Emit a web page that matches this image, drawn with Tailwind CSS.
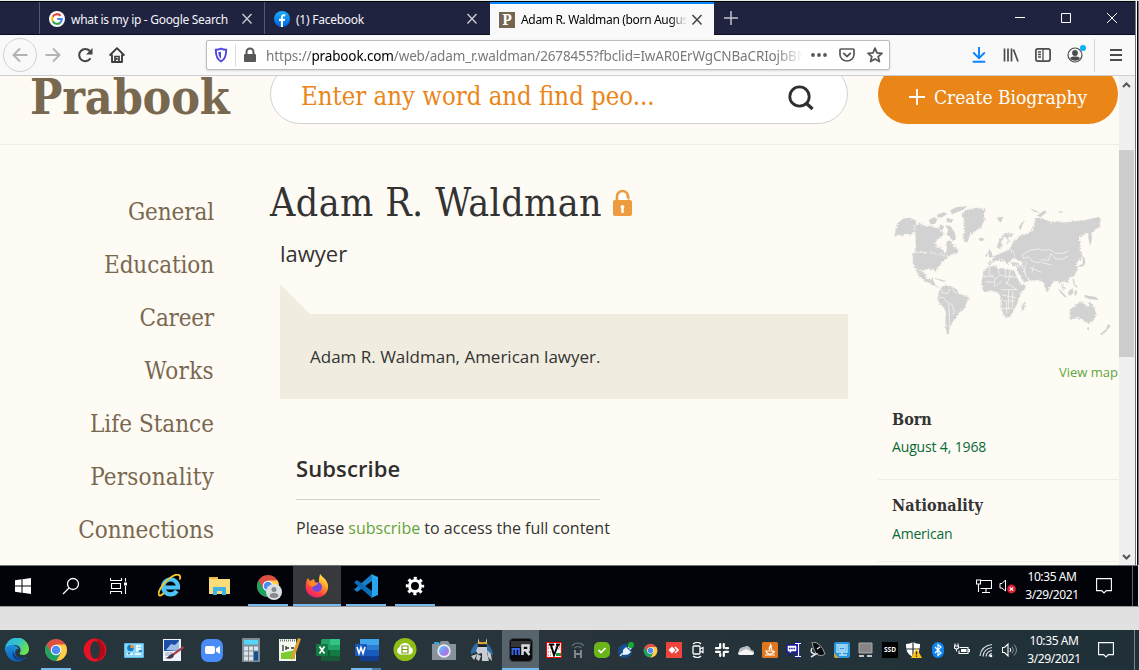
<!DOCTYPE html>
<html lang="en">
<head>
<meta charset="utf-8">
<title>Adam R. Waldman (born August 4, 1968)</title>
<script src="https://cdn.jsdelivr.net/npm/@tailwindcss/browser@4"></script>
</head>
<body class="w-[1139px] h-[670px] overflow-hidden bg-[#e1e1e1] font-['Open_Sans','Noto_Sans',sans-serif]">
<svg class="absolute w-0 h-0">
  <defs>
    <symbol id="chrome" viewBox="0 0 24 24">
      <circle cx="12" cy="12" r="11" fill="#dd5144"/>
      <path d="M12 6.5h9.5A11 11 0 0 1 12 23l4.800-8.200z" fill="#ffcd46"/>
      <path d="M2.500 6.500A11 11 0 0 0 12 23l4.800-8.200L12 17 7.200 14.700z" fill="#1da462"/>
      <circle cx="12" cy="12" r="5.300" fill="#fff"/>
      <circle cx="12" cy="12" r="4.300" fill="#4c8bf5"/>
    </symbol>
    <linearGradient id="edgeA" x1="0" y1="0" x2="1" y2="0.4"><stop offset="0" stop-color="#2bb3ea"/><stop offset=".6" stop-color="#35c4c4"/><stop offset="1" stop-color="#6be04f"/></linearGradient>
    <linearGradient id="edgeB" x1="0" y1="0" x2="0" y2="1"><stop offset="0" stop-color="#1c8fe0"/><stop offset="1" stop-color="#0f5fb0"/></linearGradient>
    <linearGradient id="fox" x1=".8" y1="0" x2=".2" y2="1"><stop offset="0" stop-color="#fff04a"/><stop offset=".35" stop-color="#ffa52b"/><stop offset=".7" stop-color="#ff4040"/><stop offset="1" stop-color="#e31587"/></linearGradient>
    <linearGradient id="lens" x1="0" y1="0" x2="1" y2="1"><stop offset="0" stop-color="#5cd0f7"/><stop offset=".5" stop-color="#8c8cf0"/><stop offset="1" stop-color="#d05ad0"/></linearGradient>
    <linearGradient id="fb" x1="0" y1="0" x2="0" y2="1"><stop offset="0" stop-color="#19afff"/><stop offset="1" stop-color="#0062e0"/></linearGradient>
    <filter id="coast" x="-.05" y="-.05" width="1.1" height="1.1"><feTurbulence type="fractalNoise" baseFrequency=".3" numOctaves="2" seed="4" result="n"/><feDisplacementMap in="SourceGraphic" in2="n" scale="14" xChannelSelector="R" yChannelSelector="G"/></filter>
  </defs>
</svg>

<!-- Remote desktop window -->
<div class="flex flex-col h-[607px] border-t border-t-[#dfeee8] border-b border-b-[#999]">
 <div class="flex h-[564px]">
  <div class="flex flex-col w-[1135px]">

  <!-- Tab strip -->
  <div class="flex h-[34px] bg-[#202340] border-t border-black border-b border-b-[#0c0c24] font-['Noto_Sans',sans-serif] text-[12px] text-[#f4f4f8]">
    <div class="w-[39px] shrink-0"></div>
    <div class="flex items-center w-[225px] shrink-0 border-l border-[#55576e] pl-[9px] pt-px">
      <svg class="w-4 h-4 shrink-0" viewBox="0 0 16 16"><circle cx="8" cy="8" r="8" fill="#fff"/><g fill="none" stroke-width="2.100"><path d="M11.600 4.700A4.900 4.900 0 0 0 3.700 5.700" stroke="#ea4335"/><path d="M3.700 5.700a4.900 4.900 0 0 0 0 4.600" stroke="#fbbc05"/><path d="M3.700 10.300a4.900 4.900 0 0 0 7.600 1.300" stroke="#34a853"/><path d="M11.300 11.600A4.700 4.700 0 0 0 12.800 8H8.200" stroke="#4285f4"/></g></svg>
      <span class="ml-[6px] mt-[2px] w-[158px] shrink-0 whitespace-nowrap tracking-[-0.3px]">what is my ip - Google Search</span>
      <svg class="ml-[12px] w-3 h-3" viewBox="0 0 12 12"><path d="M1.500 1l9 9.500M10.500 1l-9 9.500" stroke="#c9cad3" stroke-width="1.400"/></svg>
    </div>
    <div class="flex items-center w-[226px] shrink-0 border-l border-[#55576e] pl-[9px] pt-px">
      <svg class="w-4 h-4 shrink-0" viewBox="0 0 16 16"><circle cx="8" cy="8" r="8" fill="url(#fb)"/><path d="M6.900 16V10H5V7.700h1.900V6.200c0-2 1.100-3 2.800-3l1.500.1v2h-1c-.9 0-1.200.5-1.200 1.100v1.300h2.100L10.800 10H9v6z" fill="#fff"/></svg>
      <span class="ml-[6px] mt-[2px] w-[158px] whitespace-nowrap tracking-[-0.25px]">(1) Facebook</span>
      <svg class="ml-[12px] w-3 h-3" viewBox="0 0 12 12"><path d="M1.500 1l9 9.500M10.500 1l-9 9.500" stroke="#c9cad3" stroke-width="1.400"/></svg>
    </div>
    <div class="flex items-center w-[224px] h-[33px] shrink-0 bg-[#f9f9fa] border-t-2 border-[#0a84ff] pl-[9px] text-black">
      <span class="flex items-center justify-center w-4 h-4 shrink-0 bg-[#766553] text-white text-[14px] leading-none font-bold font-['DejaVu_Serif_Condensed','DejaVu_Serif',serif]">P</span>
      <span class="ml-[6px] mt-px w-[166px] overflow-hidden whitespace-nowrap tracking-[-0.33px] mask-r-from-90% mask-r-to-100%">Adam R. Waldman (born Augus</span>
      <svg class="ml-[4px] w-3 h-3 shrink-0" viewBox="0 0 12 12"><path d="M1.500 1l9 9.500M10.500 1l-9 9.500" stroke="#444" stroke-width="1.500"/></svg>
    </div>
    <svg class="ml-[9px] mt-[8px] w-4 h-4" viewBox="0 0 16 16"><path d="M8 1v14M1 8h14" stroke="#c3c4ce" stroke-width="1.500"/></svg>
    <div class="flex items-center ml-auto mr-[18px] gap-[36px] text-white">
      <svg class="w-[10px] h-[10px]" viewBox="0 0 10 10"><path d="M0 4.500h10" stroke="#fff"/></svg>
      <svg class="w-[10px] h-[10px]" viewBox="0 0 10 10"><path d="M.5.500h9v9h-9z" fill="none" stroke="#fff"/></svg>
      <svg class="w-[10px] h-[10px]" viewBox="0 0 10 10"><path d="M0 0l10 10M10 0L0 10" stroke="#fff"/></svg>
    </div>
  </div>

  <!-- Navigation toolbar -->
  <div class="flex items-center h-[41px] bg-[#f9f9fa] border-b border-[#cfcfd3] font-['Noto_Sans',sans-serif]">
    <div class="flex items-center justify-center ml-[3px] w-[34px] h-[34px] rounded-full border border-[#d0d0d3]">
      <svg class="w-4 h-4" viewBox="0 0 16 16"><path d="M15.500 8H1.500M8 1.500L1.500 8 8 14.500" fill="none" stroke="#b3b3b4" stroke-width="1.900"/></svg>
    </div>
    <svg class="ml-[8px] w-4 h-4" viewBox="0 0 16 16"><path d="M.5 8h14M8 1.500L14.500 8 8 14.500" fill="none" stroke="#b3b3b4" stroke-width="1.900"/></svg>
    <svg class="ml-[16px] w-4 h-4" viewBox="0 0 16 16"><path d="M13.500 11.300A6.100 6.100 0 1 1 12.800 4" fill="none" stroke="#444" stroke-width="2"/><path d="M15.500 1v6.500H9z" fill="#444"/></svg>
    <svg class="ml-[16px] w-4 h-4" viewBox="0 0 16 16"><path d="M.6 8.600L8 1.200l7.400 7.400M3 7.500V15h10V7.500" fill="none" stroke="#3d3d3f" stroke-width="1.900" stroke-linejoin="round"/><path d="M6 15V9.500h4V15M7.800 11v2" fill="none" stroke="#3d3d3f" stroke-width="1.700"/></svg>
    <div class="flex items-center ml-[81px] w-[684px] h-[30px] bg-white border border-[#bdbdc0] shadow-sm rounded-[2px] pl-[6px]">
      <svg class="w-4 h-4 shrink-0" viewBox="0 0 16 16"><path d="M8 1.600c2 .9 3.800 1.100 5.200 1.100 0 5-.6 9.400-5.200 11.800C3.400 12.100 2.800 7.700 2.800 2.700 4.200 2.700 6 2.500 8 1.600z" fill="none" stroke="#5148db" stroke-width="1.900"/><path d="M8 4.500v7.200C5.800 10 5.400 7.600 5.300 5.100 6.300 5.100 7 4.900 8 4.500z" fill="#5148db"/></svg>
      <span class="ml-[6px] w-px h-[22px] bg-[#dcdce0]"></span>
      <svg class="ml-[8px] w-3 h-4 shrink-0" viewBox="0 0 12 16"><rect y="7" width="12" height="8" rx="1" fill="#58585a"/><path d="M2.500 8V5a3.500 3.500 0 0 1 7 0v3" fill="none" stroke="#58585a" stroke-width="2"/></svg>
      <span class="ml-[10px] w-[537px] h-[22px] leading-[24px] shrink-0 overflow-hidden whitespace-nowrap text-[13.500px] text-[#7a7a7c] mask-r-from-95% mask-r-to-100%"><span class="tracking-[-0.14px]">https://<span class="text-black">prabook.com</span>/web/adam_r.waldman/2678455?fbclid=IwAR0ErWgCNBaCRIojbBNS</span></span>
      <svg class="ml-[8px] w-4 h-4 shrink-0" viewBox="0 0 16 16" fill="#58585a"><circle cx="2" cy="8" r="1.900"/><circle cx="8" cy="8" r="1.900"/><circle cx="14" cy="8" r="1.900"/></svg>
      <svg class="ml-[12px] w-4 h-4 shrink-0" viewBox="0 0 16 16"><path d="M2 2h12q1 0 1 1v4.500a7 6.500 0 0 1-14 0V3q0-1 1-1z" fill="none" stroke="#58585a" stroke-width="1.700"/><path d="M4.700 6.400L8 9.500l3.300-3.100" fill="none" stroke="#58585a" stroke-width="1.900" stroke-linecap="round"/></svg>
      <svg class="ml-[12px] w-4 h-4 shrink-0" viewBox="0 0 16 16"><path d="M8 1.200l2 4.600 5 .5-3.800 3.300 1.200 5L8 12l-4.400 2.600 1.200-5L1 6.300l5-.5z" fill="none" stroke="#58585a" stroke-width="1.800" stroke-linejoin="round"/></svg>
    </div>
    <div class="flex items-center ml-auto">
      <svg class="w-4 h-4" viewBox="0 0 16 16"><path d="M8 .5v10.500M2.800 6L8 11.200 13.200 6M2.500 14.700h11" fill="none" stroke="#0a84ff" stroke-width="1.900" stroke-linecap="round"/></svg>
      <svg class="ml-[16px] w-4 h-4" viewBox="0 0 16 16"><path d="M1.500 1.500v13M5 1.500v13M8.500 1.500v13M10.500 2.500l4.500 12" stroke="#4c4c4e" stroke-width="1.700"/></svg>
      <svg class="ml-[16px] w-4 h-4" viewBox="0 0 16 16"><rect x=".9" y="1.900" width="14.200" height="12.200" rx="2" fill="none" stroke="#4c4c4e" stroke-width="1.700"/><path d="M8 2v12M3 5h3M3 7.500h3M3 10h3" stroke="#4c4c4e" stroke-width="1.300"/></svg>
      <div class="relative ml-[16px] w-4 h-4">
        <svg class="w-4 h-4" viewBox="0 0 16 16"><circle cx="8" cy="8" r="7" fill="none" stroke="#4c4c4e" stroke-width="1.200"/><circle cx="8" cy="6" r="2.900" fill="#4c4c4e"/><path d="M3 11c1.500-1.400 3-1.600 5-1.600s3.500.2 5 1.600a5.900 5.900 0 0 1-10 0z" fill="#4c4c4e"/></svg>
        <span class="absolute left-[13px] top-[-2px] w-[6px] h-[6px] rounded-full bg-[#00b3f4]"></span>
      </div>
      <span class="ml-[11px] w-px h-[33px] bg-[#d7d7db]"></span>
      <svg class="ml-[14px] mr-[12px] w-[14px] h-4" viewBox="0 0 14 16"><path d="M1 3h12M1 8h12M1 13h12" stroke="#4c4c4e" stroke-width="2"/></svg>
    </div>
  </div>

  <!-- Page viewport -->
  <div class="flex h-[489px] bg-[#fefbf4]">
    <div class="flex flex-col w-[1119px] overflow-hidden">
      <header class="flex h-[69px] shrink-0 border-b border-[#efede9]">
        <div class="w-[270px] pl-[30px]"><div class="-mt-[7px] font-['DejaVu_Serif_Condensed','DejaVu_Serif',serif] font-bold text-[48px] leading-[56px] text-[#786850] tracking-[-0.2px]">Prabook</div></div>
        <div class="flex w-[578px] h-[60px] -mt-[12px] rounded-[30px] border border-[#d2d2d4] bg-white pl-[30px]">
          <div class="mt-[9px] w-[486px] font-['DejaVu_Serif_Condensed','DejaVu_Serif',serif] text-[25.500px] leading-[44px] text-[#ea8518]">Enter any word and find peo...</div>
          <svg class="mt-[19px] w-[28px] h-[28px]" viewBox="0 0 28 28"><circle cx="12.500" cy="12.500" r="9.700" fill="none" stroke="#2e3030" stroke-width="2.800"/><path d="M19 19l6.500 6" stroke="#2e3030" stroke-width="3.200"/></svg>
        </div>
        <div class="flex ml-[30px] w-[240px] h-[60px] -mt-[12px] rounded-[30px] bg-[#ea8518] pl-[31px] text-white">
          <svg class="mt-[25px] w-4 h-4" viewBox="0 0 16 16"><path d="M8 0v16M0 8h16" stroke="#fff" stroke-width="1.800"/></svg>
          <div class="ml-[9px] mt-[12px] whitespace-nowrap font-['DejaVu_Serif_Condensed','DejaVu_Serif',serif] text-[19px] leading-[42px]">Create Biography</div>
        </div>
      </header>
      <div class="flex flex-1">
        <nav class="flex flex-col items-end w-[214px] pt-[41px] font-['DejaVu_Serif_Condensed','DejaVu_Serif',serif] text-[24px] leading-[53px] text-[#786850] whitespace-nowrap">
          <a class="h-[53px] tracking-[-0.1px]">General</a><a class="h-[53px] tracking-[-0.1px]">Education</a><a class="h-[53px] tracking-[-0.2px]">Career</a><a class="h-[53px] tracking-[0.3px]">Works</a><a class="h-[53px]">Life Stance</a><a class="h-[53px] tracking-[0.15px]">Personality</a><a class="h-[53px]">Connections</a>
        </nav>
        <main class="w-[578px] ml-[56px]">
          <div class="flex items-start pt-[32px]">
            <h1 class="w-[342px] font-['DejaVu_Serif_Condensed','DejaVu_Serif',serif] text-[39px] leading-[51px] tracking-[0.42px] text-[#333] whitespace-nowrap">Adam R. Waldman</h1>
            <svg class="mt-[11px] w-[21px] h-[29px]" viewBox="0 0 21 29"><path d="M5 13V8.500a5.500 5.500 0 0 1 11 0V12z" fill="#fff" stroke="#ee9b40" stroke-width="2.700"/><path d="M6.400 9.500h9.800v2.500H6.400z" fill="#fff"/><path d="M14.700 8h2.700v2.500h-2.700z" fill="#ee9b40"/><rect x="1" y="12" width="19" height="16" rx="2" fill="#ee9b40"/><path d="M10.500 17a2 2 0 0 1 1.200 3.500V25H9.300v-4.500A2 2 0 0 1 10.500 17z" fill="#fff"/></svg>
          </div>
          <div class="pl-[10px] pt-[8px] text-[22px] leading-[34px] text-[#333]">lawyer</div>
          <svg class="ml-[10px] mt-[14px] block w-[30px] h-[30px]" viewBox="0 0 30 30"><path d="M0 0l30 30H0z" fill="#f0ede0"/></svg>
          <div class="ml-[10px] w-[568px] h-[85px] bg-[#f0ece0] pl-[30px] pt-[30px] text-[17px] leading-[26px] text-[#333]">Adam R. Waldman, American lawyer.</div>
          <div class="pl-[26px] mt-[53px] text-[22px] leading-[32px] tracking-[0.1px] font-semibold text-[#2e2e2e]">Subscribe</div>
          <div class="ml-[26px] mt-[15px] w-[304px] h-px bg-[#d3d1cc]"></div>
          <div class="pl-[26px] mt-[15px] text-[16px] leading-[26px] text-[#333] whitespace-nowrap">Please <a class="text-[#5fa53c]">subscribe</a> to access the full content</div>
        </main>
        <aside class="flex flex-col w-[240px] ml-[30px]">
          <svg class="ml-[2px] mt-[50px] w-[240px] h-[150px] shrink-0" viewBox="0 0 720 450">
            <g fill="#d2d2d2" stroke="#fefbf4" stroke-width="2" filter="url(#coast)">
              <path d="M45 110l8-26 16-14 20-3 18 8 4 12-10 28-10 6-14-4-8 6-18-2-8 8z"/>
              <path d="M104 92l14-8 22 10 14-4 10 8 12-2 6 12 10 4-2 10-16 10-8 14 6 10 16 6 6 12 4-4 2-14-2-16 12-6 8 16 12 6 6 14-6 8-16 2-12 8-10 2-46-4-40-2-2-10 2-26z"/>
              <path d="M96 172h44l44 5 8 6 14-2-6 10-14 10-4 10-10 8-4 14-8-10-20 1-14 6-14-5-10-6-4-20z"/>
              <path d="M104 222l12 4 12 4 10 6 2 14 8 4 4-6h8l-3 8 8 8 4 8 10 4-4 3-14-6-14-8-16-6-6-10-6-4-8-12z"/>
              <path d="M175 290l10-16 12-4 22 4 12 8 8 14 24 8 4 6-8 16-2 14-16 10-10 16-12 14-6 12-4 8-2 20h-5l-6-20-1-30 1-20-4-10-12-12-7-14z"/>
              <path d="M244 54l20-12 28-4 26 6-6 16 4 16-10 14 2 6-20 12-14 8-6 12-6 16h-8l-6-18 4-20-2-30z"/>
              <path d="M312 228l8-12 18-4 12-2 4 10 16-2 8 4 20 2 8 6 6 18 8 14 6 8 14-4-4 14-16 20-4 14-4 16-8 10-4 14-10 12-12 3-6-3-6-14-4-18 2-14-6-18-2-8-18-6-22 4-10-10-3-20z"/>
              <path d="M426 328l9-9 3 7-8 22-7-3z"/>
              <path d="M349 158l8-24 16-19 24-2 2 12-12 0 2 18-10 8 4-14-8-14-10 16 4 16-8 6z"/>
              <path d="M322 200l14-4 4-12 14-8 18-6 20-12 18-4 10 6-4 18 4 12-12 4-10-4-8 12-8 6-8-8-10-10 4 14-12-8-10 2-8 8-14 4z"/>
              <path d="M390 202l14-2 16 4-2 8-24 2z"/>
              <path d="M410 210l16 2 8 16 18 16 6 2-8 12-20 6-10-20-10-18z"/>
              <path d="M390 158l10-20 24-18 22-6 12-12 6-28 12-8 20 6 16 10 20-4 18 4 30-4 36-4 20-6 24-2 4 8-4 8 2 14-16 8-8 14-2-6-24 6-18 14 8 8-2 20 8 20-4 14-10 4-4 10 4 14-10 20-18 10-4 14-12-6-6 2 12 20-6 4-10-22-8-6-8 2-14 16-4 18-8-6-10-26-12-6-20 2-18-12-2-14-8-12-2-18-16-6z"/>
              <path d="M568 344l16-10 10-12 16-2 8 12 8 2 2-18 8 10 10 18 4 14-10 20-12 8-16-4-8-10-16-2-20 6z"/>
            </g>
            <g fill="#d2d2d2">
              <path d="M146 76l16-10 10 6-6 14-14 2zM170 60l20-8 12 4-14 10-14 2zM196 90l16 4 12 18 4 20-10 6-10-14-8-4 4-14zM210 46l22-10 30-2-12 10-20 8-14 6zM180 88l12 6-4 12-10-2zM200 68l20 6-6 10-14-4zM296 130l12-2 6 6-10 5-8-4zM324 172l4-10 8 12 2 12-10 2zM318 176l5 0-2 10-5-2zM350 68l20-3-8 18-6-6zM416 98l8-14 12-8-8 12-6 18zM450 40l20 8 10 6-18-4zM470 62l24-16 6 6-18 14zM532 50l20-2-10 6zM626 94l8 12 2 28-6 18-5-24zM608 184l6 6 2 14-6 10-14 2 2-5 10-4zM534 280l8 6 18 20-4 2-14-14zM566 288l12-8 2 14-10 8-6-6zM584 286l8 2-4 14-4-2zM578 248l4 4 2 16 10 8-4 2-10-10zM612 300l14 2 22 4 8 10-10-2-20-2-12-6zM620 398l9-1-4 10zM684 386l8 8-10 10-4-2zM678 402l4 5-18 14-4-3zM160 248l24 6 16 4-10 2-24-8zM496 270l4 2-1 8-4-2z"/>
            </g>
            <g fill="none" stroke="#fefbf4" stroke-width="2">
              <path d="M426 180l22-14 28-4 12 4 22-2 16 10 22 2 18-8M426 180l4 10 16-4 10 12 20 6 10-10 20 2 6-20M512 176l16 16 20 0 16-8"/>
              <path d="M178 274l8 18 16 4 8-14M177 306l14 2 8 12 16 8 8 20-4 12M206 326l4 76M218 276l4 14 16 6"/>
              <path d="M330 214l-4 22 22 16 12-14 16 8 24-4M356 212v26M376 222v24M390 222l-2 26-8 20M410 246h-22M310 246l30-4M344 252v24M364 258l-14 14M376 262l34 22M362 284h52M366 300l42 8M370 318h34M362 340h34M386 284v60M398 290v48M380 320v36M316 260l26 2M440 200l-8 32M448 218l36 14M460 214l-4 20M484 202l30 8"/>
            </g>
          </svg>
          <a class="self-end mt-[15px] text-[13px] leading-[24px] text-[#5fa53c]">View map</a>
          <div class="pl-[14px] mt-[23px] font-['DejaVu_Serif_Condensed','DejaVu_Serif',serif] font-bold text-[16px] leading-[26px] text-[#333]">Born</div>
          <div class="pl-[14px] mt-[2px] text-[14px] leading-[24px] tracking-[-0.15px] text-[#076a35]">August 4, 1968</div>
          <div class="mt-[20px] h-px shrink-0 bg-[#efede9]"></div>
          <div class="pl-[14px] mt-[13px] font-['DejaVu_Serif_Condensed','DejaVu_Serif',serif] font-bold text-[16px] leading-[26px] tracking-[0.1px] text-[#333]">Nationality</div>
          <div class="pl-[14px] mt-[3px] text-[14px] leading-[24px] tracking-[-0.2px] text-[#076a35]">American</div>
          <div class="mt-[15px] h-px shrink-0 bg-[#efede9]"></div>
        </aside>
      </div>
    </div>
    <!-- Vertical scrollbar -->
    <div class="flex flex-col w-[16px] bg-[#f0f0f0]">
      <svg class="w-[15px] h-[17px]" viewBox="0 0 15 17"><path d="M4 11l3.500-3.500L11 11" fill="none" stroke="#555" stroke-width="2"/></svg>
      <div class="mt-[57px] w-[15px] h-[207px] bg-[#cdcdcd]"></div>
      <svg class="mt-auto w-[15px] h-[17px]" viewBox="0 0 15 17"><path d="M4 7l3.500 3.500L11 7" fill="none" stroke="#555" stroke-width="2"/></svg>
    </div>
  </div>
  </div>
  <div class="w-px bg-[#777]"></div><div class="w-px bg-white"></div><div class="w-px bg-black"></div><div class="w-px bg-[#777]"></div>
 </div>

 <!-- Remote taskbar -->
 <div class="flex h-[41px] w-[1138px] bg-[#010309] border-t border-[#6d7373] text-white">
   <div class="flex items-center justify-center w-[46px]"><svg class="w-4 h-4" viewBox="0 0 16 16" fill="#fff"><path d="M0 2.200L6.500 1.300v6.200H0zM7.500 1.200L16 0v7.500H7.500zM0 8.500h6.500v6.200L0 13.800zM7.500 8.500H16V16l-8.500-1.200z"/></svg></div>
   <div class="flex items-center justify-center w-[49px]"><svg class="w-[18px] h-[18px]" viewBox="0 0 18 18"><circle cx="11" cy="7" r="5.500" fill="none" stroke="#fff" stroke-width="1.300"/><path d="M7 11l-6 6" stroke="#fff" stroke-width="1.300"/></svg></div>
   <div class="flex items-center justify-center w-[47px]"><svg class="w-[17px] h-[16px]" viewBox="0 0 17 16"><path d="M.5 0v2.500h11V0M.5 16v-2.500h11V16M1.500 5.500h9v5h-9zM15.500 0v3.500M15.500 8v8" fill="none" stroke="#fff" stroke-width="1.100"/><path d="M14 4.500h3v3h-3z" fill="#fff"/></svg></div>
   <div class="flex items-center justify-center w-[55px]"><svg class="w-6 h-6" viewBox="0 0 24 24"><path d="M5.500 13.500H20A7.500 7.500 0 1 0 18.800 17" fill="none" stroke="#4cc3f5" stroke-width="4.200"/><path d="M6 19C1 24-1.500 21 3 13.500S18-2 21.500 1.500c1 1 .8 2.600 0 4.200" fill="none" stroke="#f5c52c" stroke-width="1.800"/></svg></div>
   <div class="flex items-center justify-center w-[45px]"><svg class="w-[23px] h-[20px]" viewBox="0 0 23 20"><path d="M1 1h8l1 2h12v15H1z" fill="#fbdc7b"/><path d="M1 1h9v2H1z" fill="#f0b93c"/><path d="M5 11h13v8h-4v-4H9v4H5z" fill="#3fb2ea"/></svg></div>
   <div class="flex flex-col items-center ml-[6px] w-[40px]"><div class="relative mt-[8px] w-6 h-6"><svg class="w-6 h-6"><use href="#chrome"/></svg><svg class="absolute left-[10px] top-[10px] w-[16px] h-[16px]" viewBox="0 0 16 16"><circle cx="8" cy="8" r="8" fill="#dcdfe1"/><circle cx="8" cy="5.500" r="2.500" fill="#858a8e"/><ellipse cx="8" cy="11.500" rx="4.300" ry="2.500" fill="#858a8e"/></svg></div><div class="mt-auto w-full h-[2px] bg-[#76b9ed]"></div></div>
   <div class="flex flex-col items-center ml-[5px] w-[48px] bg-[#37393c]"><svg class="mt-[8px] w-6 h-6" viewBox="0 0 24 24"><path d="M15 0c2 3 7 5 8 11 1 7-4.500 12.500-11 12.500S0 18.500.700 12C1 9 1 7 3 4l2 3 4-2 1 3 4 1V5z" fill="url(#fox)"/><circle cx="12" cy="13" r="5" fill="#7547dd"/><path d="M3 9c4-2 7 0 10 0-1 3-4 2-5 4-2-1-4-2-5-4z" fill="#ff8a24"/></svg><div class="mt-auto w-full h-[2px] bg-[#76b9ed]"></div></div>
   <div class="flex flex-col items-center ml-[5px] w-[40px]"><svg class="mt-[8px] w-6 h-6" viewBox="0 0 24 24"><path d="M18 0v7L3 18l-3-2.500z" fill="#1480cc"/><path d="M18 24v-7L3 6 0 8.500z" fill="#0a6cb8"/><path d="M17 0l7 3v18l-7 3 1-1.500V2z" fill="#25a6ef"/></svg><div class="mt-auto w-full h-[2px] bg-[#76b9ed]"></div></div>
   <div class="flex flex-col items-center ml-[9px] w-[40px]"><svg class="mt-[10px] w-5 h-5" viewBox="0 0 20 20"><circle cx="10" cy="10" r="5.500" fill="none" stroke="#fff" stroke-width="3"/><circle cx="10" cy="10" r="7.700" fill="none" stroke="#fff" stroke-width="3" stroke-dasharray="3.024 3.024" stroke-dashoffset="1.500"/></svg><div class="mt-auto w-full h-[2px] bg-[#76b9ed]"></div></div>
   <div class="flex items-center ml-auto">
     <svg class="w-4 h-4" viewBox="0 0 16 16"><path d="M4.500 2.500h11v8h-11M10 10.500v4M6 14.500h8M.5 2h4v4h-4zM2.500 6v8" fill="none" stroke="#fff" stroke-width="1.100"/></svg>
     <svg class="ml-[7px] w-[17px] h-4" viewBox="0 0 17 16"><path d="M1 5.500h2l3.500-3.500v11L3 10H1z" fill="none" stroke="#fff"/><circle cx="12.500" cy="11" r="4.400" fill="#e02136"/><path d="M10.800 9.300l3.400 3.400M14.200 9.300l-3.400 3.400" stroke="#fff" stroke-width="1.200"/></svg>
     <div class="ml-[6px] w-[60px] text-center text-[12px] leading-[18px] tracking-[-0.4px] whitespace-nowrap font-['Noto_Sans',sans-serif]">10:35 AM<br>3/29/2021</div>
     <svg class="ml-[14px] w-[16px] h-[16px] mr-[20px]" viewBox="0 0 16 16"><path d="M.6.600h14.800v12h-5L8 15 5.600 12.600h-5z" fill="none" stroke="#fff" stroke-width="1.100"/></svg>
     <div class="w-px h-[40px] mr-[5px] bg-[#606468]"></div>
   </div>
 </div>
</div>

<!-- Host taskbar -->
<div class="flex mt-[23px] h-[40px] bg-linear-to-r from-[#26353c] via-[#28343a] to-[#1f3038] text-white">
  <div class="flex ml-[-3px] w-[545px] shrink-0">
    <div class="flex justify-center pt-[8px] w-[39px]"><svg class="w-6 h-6" viewBox="0 0 24 24"><path d="M0 12a12 12 0 0 1 24-1c0 4-3 6-6 6-3 0-4-1-3-2.500C17 11 14 7 10 7 5 7 1 10 0 14z" fill="url(#edgeA)"/><path d="M.200 10C3 6 12 6 14 11c-5-1-6 9 3 9 2 0 3-.5 5-1.300C15 27 1 25 .200 10z" fill="url(#edgeB)"/><path d="M8 13c-3 8 7 13 14 5.700C14 22 9 18 8 13z" fill="#123f8c"/></svg></div>
    <div class="flex flex-col items-center pt-[8px] w-[39px]"><svg class="w-6 h-6"><use href="#chrome"/></svg><div class="mt-auto w-[30px] h-[2px] bg-[#76b9ed]"></div></div>
    <div class="flex justify-center pt-[8px] w-[39px]"><svg class="w-6 h-6" viewBox="0 0 24 24"><ellipse cx="12" cy="12" rx="11.300" ry="11.500" fill="#e81224"/><path d="M14 1a11.300 11.500 0 0 1 0 22z" fill="#b00a18"/><ellipse cx="12" cy="12" rx="4.800" ry="9" fill="#29363c"/></svg></div>
    <div class="flex justify-center pt-[8px] w-[39px]"><svg class="w-6 h-6" viewBox="0 0 24 24"><rect x="2" y="5" width="20" height="15" rx="1" fill="#5ab8ea"/><rect x="3" y="6" width="18" height="13" fill="#8bd5f7"/><circle cx="8.500" cy="10" r="3.300" fill="#1979c4"/><path d="M8.500 10V6.700a3.300 3.300 0 0 1 3.300 3.300z" fill="#f39a26"/><path d="M14 8h5M14 11h5M5 16h6M13 16h6M15 7v7" stroke="#fff" stroke-width="1.300"/><path d="M17 13h3M6 15.500h2" stroke="#1979c4" stroke-width="1.600"/></svg></div>
    <div class="flex justify-center pt-[8px] w-[38px]"><svg class="w-6 h-6" viewBox="0 0 24 24"><path d="M3 1h18v22H3z" fill="#f0f4fa"/><path d="M4 2h15v11H4z" fill="#1d4fa8"/><path d="M6 12l5-6 4 1 4-4v10z" fill="#9dbce6"/><path d="M5 15h8M5 17h5" stroke="#8aa5cf"/><path d="M23 8L12 16l1 2L24 10z" fill="#b43a45"/><path d="M13 16c-3-1-4 4-8 4 5 2 9 0 9-3z" fill="#443848"/></svg></div>
    <div class="flex justify-center pt-[8px] w-[41px]"><svg class="w-6 h-6" viewBox="0 0 24 24"><rect x="1" y="1" width="22" height="23" rx="7" fill="#4a8cf7"/><rect x="5" y="8" width="10" height="8" rx="2" fill="#fff"/><path d="M16 10.500L20 8v8l-4-2.500z" fill="#fff"/></svg></div>
    <div class="flex justify-center pt-[8px] w-[38px]"><svg class="w-6 h-6" viewBox="0 0 24 24"><rect x="3" y="0" width="18" height="24" rx="1" fill="#7e8c98"/><rect x="5" y="2" width="14" height="4.500" fill="#53d6f7"/><path d="M5 8.500h4v4H5zm5 0h4v4h-4zm5 0h4v4h-4zM5 13.500h4v4H5zm5 0h4v4h-4zM5 18.500h4v4H5zm5 0h4v4h-4z" fill="#dbe2e8"/><path d="M15 13.500h4v9h-4z" fill="#135093"/></svg></div>
    <div class="flex justify-center pt-[8px] w-[38px]"><svg class="w-6 h-6" viewBox="0 0 24 24"><path d="M2 1h17v22H2z" fill="#f4f8ef"/><path d="M4 15l14-3v9H4z" fill="#7acb32"/><path d="M3 2.500h15" stroke="#777" stroke-dasharray="1 1" stroke-width="2"/><path d="M6 7v6M9 8v4M9 10h3M14 10h3" stroke="#333" stroke-width="1.300"/><path d="M21 0l3 1-7 19-3 2v-3z" fill="#dba031"/></svg></div>
    <div class="flex justify-center pt-[8px] w-[39px]"><svg class="w-6 h-6" viewBox="0 0 24 24"><rect x="5" y="1" width="19" height="22" rx="1.500" fill="#21a366"/><path d="M14 1h10v6H14z" fill="#33c481"/><path d="M5 12h19v11H5z" fill="#185c37"/><path d="M14 12h10v6H14z" fill="#107c41"/><rect y="6" width="12" height="12" rx="1" fill="#107c41"/><path d="M3.500 8.500l5 7M8.500 8.500l-5 7" stroke="#fff" stroke-width="1.700"/></svg></div>
    <div class="relative flex justify-center pt-[8px] w-[39px]"><svg class="w-6 h-6" viewBox="0 0 24 24"><rect x="5" y="1" width="19" height="22" rx="1.500" fill="#2b7cd3"/><path d="M5 1h19v6H5z" fill="#41a5ee"/><path d="M5 12h19v6H5z" fill="#185abd"/><path d="M5 18h19v5H5z" fill="#103f91"/><rect y="6" width="12" height="12" rx="1" fill="#185abd"/><path d="M2 9l2 6.500L6 9.500l2 6L10 9" fill="none" stroke="#fff" stroke-width="1.600"/></svg><div class="absolute bottom-0 left-[4px] flex w-[30px] h-[2px]"><span class="w-[21px] bg-[#76b9ed]"></span><span class="w-[9px] bg-[#4d7ba0]"></span></div></div>
    <div class="flex justify-center pt-[8px] w-[38px]"><svg class="w-6 h-6" viewBox="0 0 24 24"><circle cx="12" cy="11.500" r="11.500" fill="#8fbf16"/><path d="M7 16.500a4 4 0 0 1-.5-7.500 5.800 5.800 0 0 1 11 0 4 4 0 0 1-.5 7.500z" fill="#fff"/><path d="M9 8h6v7H9zM9 11.500h6" fill="none" stroke="#72a00c" stroke-width="1.200"/></svg></div>
    <div class="flex justify-center pt-[8px] w-[39px]"><svg class="w-6 h-6" viewBox="0 0 24 24"><path d="M0 6h7l2-3h7l2 3h6v16H0z" fill="#87929b"/><path d="M2 4h5v2H2z" fill="#2ea3e6"/><circle cx="12" cy="13" r="6.700" fill="#e8ecf0"/><circle cx="12" cy="13" r="5" fill="url(#lens)"/></svg></div>
    <div class="flex justify-center pt-[8px] w-[38px]"><svg class="w-6 h-6" viewBox="0 0 24 24"><path d="M8 4C3 7 0 13 1 16l6-2zM16 4c4 4 7 9 7 13l-6-3z" fill="#2d6ca6"/><path d="M8 8h9l0 7 2 8h-7l0-8-4 1-2-3z" fill="#c8cdd3"/><path d="M8 0l2 6H8zM17 0l-2 6h2z" fill="#d9dde1"/><path d="M8 3.500q4.500 1.500 9 0V6H8z" fill="#e9a82c"/><path d="M8 7h9v2H8z" fill="#1b2026"/><path d="M17 12l4 4 1 7-4-4zM7 16l4 2-2 5-3-2zM1 18l6-2-3 6z" fill="#c3c8cd"/></svg></div>
    <div class="flex flex-col items-center pt-[8px] w-[37px] ml-[1px] bg-[#58646b]"><svg class="w-6 h-6" viewBox="0 0 24 24"><rect x=".5" y=".5" width="23" height="23" rx="4" fill="#0b0b0e" stroke="#3a3d42"/><path d="M2 3h20v6H2z" fill="#34363a"/><path d="M3.500 17v-6h6.500v6M6.800 11v6" fill="none" stroke="#3964e8" stroke-width="1.900"/><path d="M13.500 17V7.500h6v4.800h-6M17 12.500l3.500 4.500" fill="none" stroke="#d6dadf" stroke-width="2.500"/></svg><div class="mt-auto w-full h-[2px] bg-[#76b9ed]"></div></div>
  </div>
  <div class="grid grid-cols-[repeat(20,24px)] w-[480px] shrink-0 items-center justify-items-center">
    <svg class="w-4 h-4" viewBox="0 0 16 16"><path d="M.5.500h15v15H.5z" fill="#fff" stroke="#f00" stroke-width="1.200"/><path d="M2 3h12M2 6h3M10 7h4M2 10h4M9 5h5M2 13h3" stroke="#b44" stroke-dasharray="1 1"/><path d="M3 2.500h5M10 2.500h4M5 3l3 10L12 3" fill="none" stroke="#000" stroke-width="2"/><path d="M10 11h5v3h-5z" fill="#159a3d"/></svg>
    <svg class="w-4 h-4" viewBox="0 0 16 16"><path d="M5 8v8M11 8v8M5 12h6" stroke="#7e888d" stroke-width="2"/><path d="M2 4c3-4 9-4 12 0M4.500 6c2-2 5-2 7 0" fill="none" stroke="#68757b" stroke-width="1.200"/></svg>
    <svg class="w-4 h-4" viewBox="0 0 16 16"><rect width="16" height="16" rx="5" fill="#6bb51a"/><path d="M4.500 8l2.500 2.500L11.500 6" fill="none" stroke="#fff" stroke-width="1.700"/></svg>
    <svg class="w-4 h-4" viewBox="0 0 16 16"><circle cx="7" cy="9" r="7" fill="#164e8e"/><path d="M2 14l3-3M10 6l2-2M11.500 7.500l2-2" stroke="#e8f2fb" stroke-width="1.300"/><path d="M8 5l5 5-3 2.500-5 .5v-5z" fill="#e8f2fb"/><circle cx="13" cy="3" r="3" fill="#18ad35"/></svg>
    <svg class="w-[15px] h-[15px]"><use href="#chrome"/></svg>
    <svg class="w-4 h-4" viewBox="0 0 16 16"><path d="M0 0h16v16H0z" fill="#ef443b"/><path d="M6 4.500L9.500 8 6 11.500 2.500 8z" fill="#fff"/><path d="M9 5l3 3-3 3" fill="none" stroke="#fff" stroke-width="1.600"/></svg>
    <svg class="w-4 h-4" viewBox="0 0 16 16"><rect x="3" y="4" width="7" height="8" rx="1" fill="none" stroke="#fff" stroke-width="1.300"/><path d="M10 7l3-1.500v5L10 9M3 2c3-2 6-2 8 0M3 14c3 2 6 2 8 0" fill="none" stroke="#fff" stroke-width="1.200"/></svg>
    <svg class="w-4 h-4" viewBox="0 0 16 16"><path d="M6.200 2v4M2 6.200h3M9.800 2v4M12 6.200h2M2 9.800h4M6.200 12v2M9.800 10.200V14M10.500 9.800H14" stroke="#fff" stroke-width="2.200" stroke-linecap="round"/></svg>
    <svg class="w-4 h-4" viewBox="0 0 16 16"><path d="M1 9c0-3 3-4 5-4 4-3 7 1 7 3 4 0 4 5 0 5H3c-3 0-3-3-2-4z" fill="#b9bcbe"/><path d="M0 11l8-4 8 4q0 2-2 2H3q-3 0-3-2z" fill="#f5f5f5"/></svg>
    <svg class="w-4 h-4" viewBox="0 0 16 16"><rect width="16" height="16" rx="1.500" fill="#e2761c"/><path d="M8 2c3 2-3 3 0 6M10 4c-2 1-1 2 0 4M4 9h7v2q-3 2-6 0zM11 9q3 0 0 2M3 13h10" fill="none" stroke="#fff" stroke-width="1.200"/></svg>
    <svg class="w-4 h-4" viewBox="0 0 16 16"><path d="M9 1.500h6M9 14.500h6M12.500 1.500v13" stroke="#1a1a9c" stroke-width="3"/><path d="M9 1.500h6M9 14.500h6M12.500 1.500v13" stroke="#fff" stroke-width="1.200"/><path d="M1 3h10v7H6l-3 3v-3H1z" fill="#fff" stroke="#1a1a9c" stroke-width="1.400"/><path d="M3 6.500h6" stroke="#1a1a9c" stroke-dasharray="1.500 .7" stroke-width="1.600"/></svg>
    <svg class="w-4 h-4" viewBox="0 0 16 16"><path d="M2 0q9 0 13 12q-3 3-7 1T2 0z" fill="#0b0d0e" stroke="#9ca3a6"/><path d="M2 6c-2 4 0 6 4 6l-5 3M7 7l3-2" fill="none" stroke="#dfe4e6" stroke-width="1.500"/></svg>
    <svg class="w-4 h-4" viewBox="0 0 16 16"><rect width="16" height="16" rx="2" fill="#2796dc"/><path d="M3 3h10v7H3zM5 5h6v3H5zM5 13h8M8 10v3" fill="none" stroke="#bfe7fa" stroke-width="1.300"/><path d="M0 11l5 5H2q-2 0-2-2z" fill="#d5a53b"/></svg>
    <svg class="w-4 h-4" viewBox="0 0 16 16"><path d="M1 1h13v10H1z" fill="#858585" stroke="#aaa"/><path d="M1 13h5v2H1zM9 13h5v2H9z" fill="#c4c4c4"/></svg>
    <div class="flex items-center justify-center w-4 h-4 bg-black text-white text-[6.500px] leading-none font-bold">SSD</div>
    <svg class="w-4 h-4" viewBox="0 0 16 16"><path d="M7 0q3 2 7 2c0 6-1 10-7 13C1 12 0 8 0 2q4 0 7-2z" fill="#fff"/><path d="M7 0v15M0 7h14" stroke="#28343a" stroke-width="1.200"/><path d="M10.500 6L16 16H5z" fill="#fcc21b"/><path d="M10.500 9.500v3M10.500 13.500v1.300" stroke="#222" stroke-width="1.300"/></svg>
    <svg class="w-4 h-4" viewBox="0 0 16 16"><rect x="2" width="12" height="16" rx="6" fill="#0a84f0"/><path d="M5 5l6 6-3 2.500v-11L11 5l-6 6" fill="none" stroke="#fff" stroke-width="1.200"/></svg>
    <svg class="w-4 h-4" viewBox="0 0 16 16"><path d="M5.500 5.500h8.500v6H5v-3M14 7.500h1.500v2H14M1 1.500v2M4 1.500v2M.5 4h4v2q-2 2-4 0zM2.500 7.500v2" fill="none" stroke="#fff" stroke-width="1.100"/><path d="M7 7h5.500v3H7z" fill="#fff"/></svg>
    <svg class="w-4 h-4" viewBox="0 0 16 16"><g fill="none" stroke="#d8dcde" stroke-width="1.200"><path d="M2 14Q3 4 14 2.500M5 14.500Q5.500 7 14 5.500M8 14.500Q8.500 9.500 14 8.500M11 14.500q.5-3 3-3"/></g><circle cx="13" cy="14" r="1.300" fill="#fff"/></svg>
    <svg class="w-4 h-4" viewBox="0 0 16 16"><path d="M.5 5.500h2L6 2v12L2.500 10.500h-2z" fill="none" stroke="#fff" stroke-width="1.100"/><path d="M8 6q1.500 2 0 4" fill="none" stroke="#fff"/><path d="M10 4.500q3 3.500 0 7M12 2.500q5 5.500 0 11" fill="none" stroke="#87949a"/></svg>
  </div>
  <div class="flex items-center flex-1">
    <div class="ml-[2px] w-[60px] text-center text-[12px] leading-[18px] tracking-[-0.4px] whitespace-nowrap font-['Noto_Sans',sans-serif]">10:35 AM<br>3/29/2021</div>
    <svg class="ml-[14px] w-[16px] h-[16px]" viewBox="0 0 16 16"><path d="M.6.600h14.800v12h-5L8 15 5.600 12.600h-5z" fill="none" stroke="#fff" stroke-width="1.100"/></svg>
    <div class="ml-auto w-px h-[40px] mr-[4px] bg-[#76838a]"></div>
  </div>
</div>
</body>
</html>
